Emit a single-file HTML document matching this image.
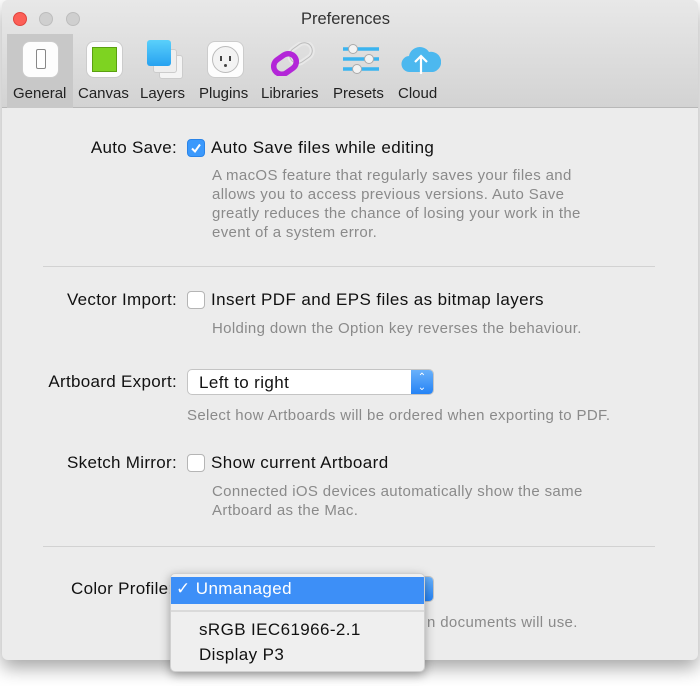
<!DOCTYPE html>
<html><head><meta charset="utf-8"><style>
*{margin:0;padding:0;box-sizing:border-box}
body{width:700px;height:686px;background:#fff;position:relative;overflow:hidden;font-family:"Liberation Sans",sans-serif;}
.win{position:absolute;left:2px;top:0;width:696px;height:660px;background:#ececec;border-radius:6px;box-shadow:0 8px 18px rgba(0,0,0,.35);overflow:hidden}
.tb{position:absolute;left:0;top:0;width:696px;height:108px;background:linear-gradient(#e8e8e8,#d3d3d3);border-bottom:1px solid #b8b8b8}
.a{position:absolute;white-space:nowrap}
.lbl{font-size:17px;letter-spacing:0.3px;color:#111;text-align:right}
.t{font-size:17px;letter-spacing:0.4px;color:#111}
.d{font-size:15px;letter-spacing:0.35px;color:#8a8a8a;line-height:19px}
.cb{position:absolute;width:18px;height:18px;border:1px solid #b5b5b5;border-radius:4px;background:#fff}
.hr{position:absolute;left:41px;width:612px;height:1px;background:#d2d2d2}
.tl{position:absolute;top:12px;width:14px;height:14px;border-radius:50%}
.tab{position:absolute;top:85px;font-size:15px;color:#222}
</style></head><body>
<div class="win">
<div class="tb">
 <div class="tl" style="left:11px;background:#fc5f57;border:1px solid #e0443e"></div>
 <div class="tl" style="left:37px;background:#cfcfcf;border:1px solid #bdbdbd"></div>
 <div class="tl" style="left:64px;background:#cfcfcf;border:1px solid #bdbdbd"></div>
 <div class="a" style="left:299px;top:10px;font-size:16.5px;color:#333">Preferences</div>
 <div style="position:absolute;left:5px;top:34px;width:66px;height:74px;background:#c8c8c8"></div>
 <div style="position:absolute;left:20px;top:41px;width:37px;height:37px;border-radius:8px;background:#fdfdfd;border:1px solid #ccc"></div>
 <div style="position:absolute;left:34px;top:49px;width:10px;height:20px;border:1.5px solid #888;border-radius:2px;background:#fff"></div>
 <div style="position:absolute;left:84px;top:41px;width:37px;height:37px;border-radius:8px;background:#fdfdfd;border:1px solid #ccc"></div>
 <div style="position:absolute;left:90px;top:47px;width:25px;height:25px;background:#7ed321;border:1px solid #5aa010"></div>
 <div style="position:absolute;left:157px;top:55px;width:24px;height:24px;background:#f4f4f4;border:1px solid #ccc;border-radius:3px"></div>
 <div style="position:absolute;left:151px;top:49px;width:24px;height:24px;background:#eee;border:1px solid #ccc;border-radius:3px"></div>
 <div style="position:absolute;left:145px;top:40px;width:24px;height:26px;background:linear-gradient(#5ad0fb,#27a2f0);border-radius:3px"></div>
 <div style="position:absolute;left:205px;top:41px;width:37px;height:37px;border-radius:8px;background:#fdfdfd;border:1px solid #ccc"></div>
 <div style="position:absolute;left:210px;top:46px;width:27px;height:27px;border-radius:50%;background:#f3f3f3;border:1px solid #bbb"></div>
 <div style="position:absolute;left:218px;top:56px;width:2px;height:5px;background:#444"></div>
 <div style="position:absolute;left:227px;top:56px;width:2px;height:5px;background:#444"></div>
 <div style="position:absolute;left:222px;top:64px;width:3px;height:3px;background:#444;border-radius:50%"></div>
 <svg style="position:absolute;left:268px;top:42px" width="46" height="34" viewBox="0 0 46 34">
  <rect x="19" y="3" width="24" height="16" rx="8" transform="rotate(-35 31 11)" fill="none" stroke="#e8e8e8" stroke-width="5"/>
  <rect x="19" y="3" width="24" height="16" rx="8" transform="rotate(-35 31 11)" fill="none" stroke="#bbb" stroke-width="1"/>
  <rect x="3" y="14" width="24" height="16" rx="8" transform="rotate(-35 15 22)" fill="none" stroke="#b326d8" stroke-width="5.5"/>
 </svg>
 <svg style="position:absolute;left:339px;top:43px" width="40" height="33">
  <g stroke="#3bb4ef" stroke-width="3.5"><line x1="2" y1="6" x2="38" y2="6"/><line x1="2" y1="16" x2="38" y2="16"/><line x1="2" y1="26" x2="38" y2="26"/></g>
  <g fill="#f3f3f3" stroke="#aaa"><circle cx="12" cy="6" r="4.5"/><circle cx="28" cy="16" r="4.5"/><circle cx="16" cy="26" r="4.5"/></g>
 </svg>
 <svg style="position:absolute;left:399px;top:42px" width="40" height="34">
  <path d="M9 30 A8 8 0 0 1 8 14 A11 11 0 0 1 28 10 A9 9 0 0 1 32 30 Z" fill="#4cb8ef"/>
  <path d="M20 32 V14 M14 20 L20 14 L26 20" stroke="#fff" stroke-width="2.2" fill="none"/>
 </svg>
 <div class="tab" style="left:11px">General</div>
 <div class="tab" style="left:76px">Canvas</div>
 <div class="tab" style="left:138px">Layers</div>
 <div class="tab" style="left:197px">Plugins</div>
 <div class="tab" style="left:259px">Libraries</div>
 <div class="tab" style="left:331px">Presets</div>
 <div class="tab" style="left:396px">Cloud</div>
</div>

<div class="a lbl" style="right:521px;top:138px">Auto Save:</div>
<div class="cb" style="left:185px;top:139px;background:#3b99fc;border-color:#2a84e8"><svg width="16" height="16" style="position:absolute;left:0;top:0"><path d="M4 8.5 L7 11.5 L12 4.5" stroke="#fff" stroke-width="2" fill="none"/></svg></div>
<div class="a t" style="left:209px;top:138px">Auto Save files while editing</div>
<div class="a d" style="left:210px;top:166px">A macOS feature that regularly saves your files and<br>allows you to access previous versions. Auto Save<br>greatly reduces the chance of losing your work in the<br>event of a system error.</div>
<div class="hr" style="top:266px"></div>

<div class="a lbl" style="right:521px;top:290px">Vector Import:</div>
<div class="cb" style="left:185px;top:291px"></div>
<div class="a t" style="left:209px;top:290px">Insert PDF and EPS files as bitmap layers</div>
<div class="a d" style="left:210px;top:319px">Holding down the Option key reverses the behaviour.</div>

<div class="a lbl" style="right:521px;top:372px">Artboard Export:</div>
<div style="position:absolute;left:185px;top:369px;width:247px;height:26px;background:#fff;border:1px solid #c4c4c4;border-radius:5px;overflow:hidden">
 <div class="a t" style="left:11px;top:3px">Left to right</div>
 <div style="position:absolute;right:0;top:0;width:22px;height:26px;background:linear-gradient(#69b1fa,#1f7ff5);color:#fff;font-size:10px;text-align:center;line-height:10px;padding-top:3px">&#8963;<br>&#8964;</div>
</div>
<div class="a d" style="left:185px;top:406px">Select how Artboards will be ordered when exporting to PDF.</div>

<div class="a lbl" style="right:521px;top:453px">Sketch Mirror:</div>
<div class="cb" style="left:185px;top:454px"></div>
<div class="a t" style="left:209px;top:453px">Show current Artboard</div>
<div class="a d" style="left:210px;top:482px">Connected iOS devices automatically show the same<br>Artboard as the Mac.</div>
<div class="hr" style="top:546px"></div>

<div class="a lbl" style="left:69px;top:579px">Color Profile:</div>
<div style="position:absolute;left:185px;top:576px;width:247px;height:26px;background:#fff;border:1px solid #c4c4c4;border-radius:5px;overflow:hidden">
 <div style="position:absolute;right:0;top:0;width:22px;height:26px;background:linear-gradient(#69b1fa,#1f7ff5)"></div>
</div>
<div class="a d" style="left:425px;top:613px">n documents will use.</div>
</div>

<div style="position:absolute;left:170px;top:573px;width:255px;height:99px;background:#efefef;border-radius:5px;box-shadow:0 3px 10px rgba(0,0,0,.35);border:1px solid #d0d0d0;overflow:hidden">
 <div style="position:absolute;left:0;top:3px;width:255px;height:27px;background:#3d8ff7"></div>
 <div class="a" style="left:5px;top:5px;font-size:17px;letter-spacing:0.4px;color:#fff">✓ Unmanaged</div>
 <div style="position:absolute;left:0;top:36px;width:255px;height:2px;background:#dadada"></div>
 <div class="a t" style="left:28px;top:46px">sRGB IEC61966-2.1</div>
 <div class="a t" style="left:28px;top:71px">Display P3</div>
</div>
</body></html>
